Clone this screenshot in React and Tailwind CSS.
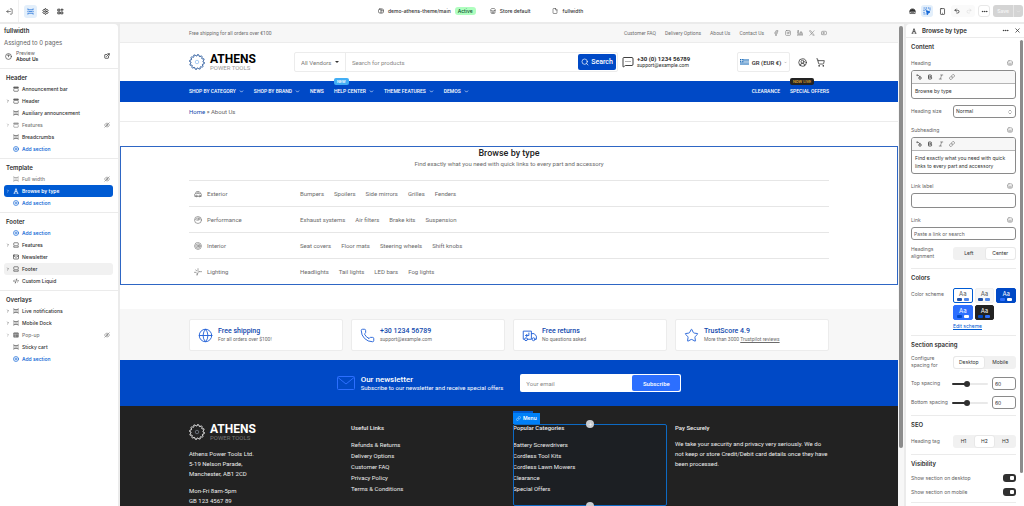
import { useState } from 'react';
import {
  LogOut, Settings, Smartphone, Undo2, Redo2, Ellipsis, ChevronDown, ChevronRight, ExternalLink, CirclePlus,
  Mail, CodeXml, Store, File, Globe, Phone, Star, Search, Facebook, Instagram, Linkedin, Youtube,
  MessageSquareMore, CircleUserRound, ShoppingCart, X, Bold, Italic, Link, ChevronsUpDown, Plus
} from 'lucide-react';

const groups = [
  {
    title: 'Header',
    rows: [
      { name: 'Announcement bar', icon: 'top' },
      { name: 'Header', icon: 'top', open: true },
      { name: 'Auxiliary announcement', icon: 'section' },
      { name: 'Features', icon: 'top', open: true, hidden: true },
      { name: 'Breadcrumbs', icon: 'section' },
      { name: 'Add section', icon: 'add' }
    ]
  },
  {
    title: 'Template',
    rows: [
      { name: 'Full width', icon: 'section', hidden: true },
      { name: 'Browse by type', icon: 'text', open: true, active: true },
      { name: 'Add section', icon: 'add' }
    ]
  },
  {
    title: 'Footer',
    rows: [
      { name: 'Add section', icon: 'add' },
      { name: 'Features', icon: 'bottom', open: true },
      { name: 'Newsletter', icon: 'mail' },
      { name: 'Footer', icon: 'bottom', open: true, hover: true },
      { name: 'Custom Liquid', icon: 'code' }
    ]
  },
  {
    title: 'Overlays',
    rows: [
      { name: 'Live notifications', icon: 'section', open: true },
      { name: 'Mobile Dock', icon: 'section', open: true },
      { name: 'Pop-up', icon: 'popup', open: true, hidden: true },
      { name: 'Sticky cart', icon: 'section' },
      { name: 'Add section', icon: 'add' }
    ]
  }
];

const types = [
  { name: 'Exterior', icon: 'car', links: ['Bumpers', 'Spoilers', 'Side mirrors', 'Grilles', 'Fenders'] },
  { name: 'Performance', icon: 'gauge', links: ['Exhaust systems', 'Air filters', 'Brake kits', 'Suspension'] },
  { name: 'Interior', icon: 'wheel', links: ['Seat covers', 'Floor mats', 'Steering wheels', 'Shift knobs'] },
  { name: 'Lighting', icon: 'spark', links: ['Headlights', 'Tail lights', 'LED bars', 'Fog lights'] }
];

const schemes = [
  { box: 'bg-white text-[#555] border-[#005bd3]', a: 'bg-[#1d4fa5]', b: 'bg-[#4d86e8]', selected: true },
  { box: 'bg-[#f7f7f7] text-[#555] border-[#f1f1f1]', a: 'bg-[#1d4fa5]', b: 'bg-[#4d86e8]' },
  { box: 'bg-[#0049c6] text-white border-[#0049c6]', a: 'bg-[#2c6fff]', b: 'bg-white' },
  { box: 'bg-[#2c6fff] text-white border-[#2c6fff]', a: 'bg-[#0049c6]', b: 'bg-white' },
  { box: 'bg-[#222] text-white border-[#222]', a: 'bg-[#0049c6]', b: 'bg-[#2c6fff]' }
];

function Svg({ className, width = 1.8, children }) {
  return (
    <svg viewBox="0 0 24 24" fill="none" stroke="currentColor" strokeWidth={width} strokeLinecap="round" strokeLinejoin="round" className={className}>
      {children}
    </svg>
  );
}

function SectionIcon({ type, className }) {
  if (type === 'add') return <CirclePlus className={className} strokeWidth={2.5} />;
  if (type === 'mail') return <Mail className={className} strokeWidth={2.5} />;
  if (type === 'code') return <CodeXml className={className} strokeWidth={2.5} />;
  return (
    <svg viewBox="0 0 16 16" fill="none" stroke="currentColor" strokeWidth="1.5" className={className}>
      {type === 'top' && (
        <>
          <path d="M2 2.500h12v3.500H2z" fill="currentColor" fillOpacity="0.6" />
          <path d="M2 8.500v4a1.500 1.500 0 0 0 1.500 1.500h9a1.500 1.500 0 0 0 1.500-1.500v-4" />
        </>
      )}
      {type === 'bottom' && (
        <>
          <path d="M2 8V3.500A1.500 1.500 0 0 1 3.500 2h9A1.500 1.500 0 0 1 14 3.500V8" />
          <path d="M2 10h12v4H2z" />
        </>
      )}
      {type === 'section' && (
        <>
          <path d="M2 1v3h12V1M2 15v-3h12v3" />
          <path d="M2 6.500v3M14 6.500v3M4 8h8" />
        </>
      )}
      {type === 'popup' && (
        <>
          <rect x="1.500" y="2" width="13" height="12" rx="1.500" fill="currentColor" />
          <path d="M1.500 6h13M6 6v8" stroke="#fff" strokeWidth="0.800" />
        </>
      )}
      {type === 'text' && <path d="M1.500 14h5M9.500 14h5M4 14 7.500 2h1L12 14M5.500 9.500h5" strokeWidth="2" />}
    </svg>
  );
}

function TypeIcon({ type, className }) {
  return (
    <Svg className={className}>
      {type === 'car' && (
        <>
          <path d="M2 18v-6l3-2 2-5h9l4 5 2 2v6zM5 10h15M12 5v5" />
          <circle cx="7" cy="18" r="2.500" />
          <circle cx="17" cy="18" r="2.500" />
        </>
      )}
      {type === 'gauge' && (
        <>
          <circle cx="12" cy="12" r="10.500" />
          <path d="M5 9c3-4 11-4 14 0l-4 3H9zM12 12l3-6" />
        </>
      )}
      {type === 'wheel' && (
        <>
          <path d="M12 1.500 19.500 4.500 22.500 12 19.500 19.500 12 22.500 4.500 19.500 1.500 12 4.500 4.500z" />
          <circle cx="12" cy="12" r="6.500" />
          <circle cx="12" cy="12" r="2.500" />
        </>
      )}
      {type === 'spark' && <path d="M1 13h5l3 3v6l3-8 3-3h8M12 2v6l3 3M5 6l4 3" />}
    </Svg>
  );
}

function ReturnTruck({ className }) {
  return (
    <Svg className={className} width={1.5}>
      <path d="M4 18H2V5h13v13H9M15 9h4.500L23 13v5h-2" />
      <circle cx="6.500" cy="18" r="2.300" />
      <circle cx="18.500" cy="18" r="2.300" />
      <path d="M11 8v4H6M8 10l-2 2 2 2" />
    </Svg>
  );
}

function SocialX({ className }) {
  return (
    <Svg className={className}>
      <path d="M3 3h4.500L21 21h-4.500zM20.500 3 13.500 10.800M10.500 13.500 3.500 21" />
    </Svg>
  );
}

function HiddenIcon({ className }) {
  return (
    <Svg className={className} width={2.4}>
      <path d="M5 17C2 14 2 10 6 7c4-3 8-2 10-1M19 8c3 3 3 7-1 10-3 2-7 2-9 1M21 3 3 21" />
      <circle cx="12" cy="12" r="2" />
    </Svg>
  );
}

// saw blade outline with 12 teeth
function sawPath() {
  const teeth = 12;
  let d = '';
  for (let i = 0; i < teeth; i++) {
    const step = (Math.PI * 2) / teeth;
    const point = (r, t) => `${(16 + r * Math.cos((i + t) * step)).toFixed(2)} ${(16 + r * Math.sin((i + t) * step)).toFixed(2)}`;
    d += `${i ? 'L' : 'M'}${point(12, 0)}L${point(15.2, 0.15)}L${point(14.6, 0.5)}L${point(12, 0.75)}`;
  }
  return d + 'Z';
}

function Logo({ dark }) {
  return (
    <a href="#" className="flex items-center gap-[5px]">
      <svg viewBox="0 0 32 32" fill="none" className="size-4 shrink-0">
        <path d={sawPath()} stroke={dark ? '#fff' : '#174a93'} strokeWidth="1.700" strokeLinejoin="round" />
        <circle cx="16" cy="16" r="3.500" stroke={dark ? '#8a94a3' : '#7db4ec'} strokeWidth="1.300" />
      </svg>
      <span className="flex flex-col">
        <span className={`text-[12px] leading-[11px] font-bold ${dark ? 'text-white' : 'text-black'}`}>ATHENS</span>
        <span className={`text-[6px] leading-[5px] ${dark ? 'text-[#777]' : 'text-[#999]'}`}>POWER TOOLS</span>
      </span>
    </a>
  );
}

function TopBar() {
  return (
    <header className="flex items-center justify-between bg-white h-[22px] pr-px text-[#303030] shrink-0">
      <div className="flex items-center">
        <button aria-label="Exit" className="w-[19px] h-[22px] flex items-center justify-center border-r border-[#f1f1f1]">
          <LogOut className="size-[7px] rotate-180" />
        </button>
        <div className="flex items-center gap-[2px] pl-[5px]">
          <button aria-label="Sections" className="size-[13px] rounded-[3px] bg-[#e3effb] text-[#005bd3] flex items-center justify-center">
            <SectionIcon type="section" className="size-[7px]" />
          </button>
          <button aria-label="Theme settings" className="size-[13px] flex items-center justify-center">
            <Settings className="size-[7px]" strokeWidth={3} />
          </button>
          <button aria-label="App embeds" className="size-[13px] flex items-center justify-center">
            <Svg className="size-[7px]" width={3}>
              <path d="M4 4h6v6H4zM4 14h6v6H4zM14 14h6v6h-6zM17 3v7M14 6h7" />
            </Svg>
          </button>
        </div>
      </div>

      <div className="flex items-center font-medium mr-3">
        <Svg className="size-[6px] mr-1" width={2.4}>
          <rect x="2" y="4" width="20" height="16" rx="5" />
          <path d="M12 4v16M12 11h9" />
        </Svg>
        <span>demo-athens-theme/main</span>
        <span className="bg-[#affebf] text-[#0c5132] rounded-[3px] px-[3px] leading-[8px] ml-1">Active</span>
        <Store className="size-[6px] ml-[14px] mr-1" />
        <span>Store default</span>
        <File className="size-[6px] ml-[22px] mr-1" />
        <span>fullwidth</span>
      </div>

      <div className="flex items-center gap-[3px]">
        <button aria-label="Market" className="size-[12px] flex items-center justify-center">
          <Svg className="size-[7px]" width={2.4}>
            <path d="M3 11c0-5 3-8 9-8s9 3 9 8z" fill="currentColor" />
            <path d="M3 11v8h18v-8M8 15h8" />
          </Svg>
        </button>
        <button aria-label="Inspector" className="size-[12px] rounded-[3px] bg-[#e3effb] text-[#005bd3] flex items-center justify-center">
          <Svg className="size-[8px]" width={2.4}>
            <path d="M3 3h1M9 3h2M16 3h1M21 3v1M3 9v2M3 16v1M3 21h1M9 21h1M21 8v1M8 8h1" />
            <path d="m11 11 10 4-5 2-2 5z" fill="currentColor" />
          </Svg>
        </button>
        <button aria-label="Viewport" className="size-[12px] flex items-center justify-center">
          <Smartphone className="size-[7px]" strokeWidth={2.5} />
        </button>
        <div className="flex rounded-[3px] bg-[#fafafa]">
          <button aria-label="Undo" className="size-[12px] flex items-center justify-center"><Undo2 className="size-[6px]" strokeWidth={3} /></button>
          <button aria-label="Redo" className="size-[12px] flex items-center justify-center text-[#d4d4d4]"><Redo2 className="size-[6px]" /></button>
        </div>
        <button aria-label="More" className="size-[12px] rounded-[3px] border border-[#e8e8e8] flex items-center justify-center">
          <Ellipsis className="size-[7px]" strokeWidth={3} />
        </button>
        <div className="flex h-[12px] rounded-[3px] bg-[#d4d4d4] text-[#f5f5f5] overflow-hidden">
          <button className="px-1 font-semibold">Save</button>
          <button aria-label="Save options" className="w-[10px] border-l border-[#e6e6e6] flex items-center justify-center">
            <ChevronDown className="size-[5px]" />
          </button>
        </div>
      </div>
    </header>
  );
}

function Sidebar() {
  return (
    <aside className="w-[118px] shrink-0 bg-white rounded-tr-[4px] text-[#303030] overflow-hidden">
      <div className="px-1 pt-[3px] pb-[6px]">
        <h1 className="font-semibold text-[6px] leading-[8px]">fullwidth</h1>
        <p className="text-[#616161] text-[6px] leading-[8px] mt-[4px]">Assigned to 0 pages</p>
        <div className="flex items-center mt-[3px] pl-[1px] pr-[4px]">
          <Svg className="size-[7px] text-[#4a4a4a]" width={2.4}>
            <circle cx="12" cy="12" r="10" />
            <path d="M8 8c2-2 6-2 8 0M12 8v5" />
          </Svg>
          <div className="ml-[4px] leading-[6px] flex-1">
            <p className="text-[#616161]">Preview</p>
            <p className="font-semibold">About Us</p>
          </div>
          <button aria-label="Open preview"><ExternalLink className="size-[6px]" strokeWidth={3} /></button>
        </div>
      </div>

      {groups.map((group) => (
        <section key={group.title} className="border-t border-[#ebebeb] py-[3px] pl-1 pr-[5px]">
          <h2 className="font-semibold text-[6px] leading-[11px] pl-[2px]">{group.title}</h2>
          <ul>
            {group.rows.map((row) => (
              <li key={row.name}>
                <button
                  className={`w-full h-[12px] rounded-[3px] flex items-center text-left px-[2px] ${
                    row.active ? 'bg-[#005bd3] text-white font-semibold'
                      : row.icon === 'add' ? 'text-[#005bd3] font-medium'
                        : row.hidden ? 'text-[#7a7a7a] font-medium' : 'font-medium'
                  } ${row.hover ? 'bg-[#f1f1f1]' : ''}`}
                >
                  <span className="w-[7px]">{row.open && <ChevronRight className="size-[4px]" strokeWidth={3} />}</span>
                  <SectionIcon type={row.icon} className="size-[6px] mr-[3px]" />
                  <span className="flex-1">{row.name}</span>
                  {row.hidden && <HiddenIcon className="size-[6px] mr-[1px]" />}
                </button>
              </li>
            ))}
          </ul>
        </section>
      ))}
    </aside>
  );
}

function NavLink({ children, menu, badge, badgeClass }) {
  return (
    <a href="#" className="relative flex items-center gap-[3px]">
      {children}
      {menu && <ChevronDown className="size-[5px]" strokeWidth={3} />}
      {badge && <span className={`absolute left-0 -top-[10px] rounded-[2px] px-[3px] text-[4px] leading-[7px] whitespace-nowrap ${badgeClass}`}>{badge}</span>}
    </a>
  );
}

function Feature({ icon: Icon, title, children }) {
  return (
    <div className="bg-white border border-[#ececec] rounded-[2px] flex items-center gap-[5px] h-8 px-[8px]">
      <Icon className="size-[15px] text-[#2563d8]" strokeWidth={1.5} />
      <div>
        <p className="text-[7px] leading-[9px] font-medium text-[#1149ad]">{title}</p>
        <p className="leading-[7px] text-[#6b6b6b]">{children}</p>
      </div>
    </div>
  );
}

function FooterLinks({ title, links }) {
  return (
    <>
      <h3 className="font-medium leading-[7px]">{title}</h3>
      <ul className="mt-2 leading-[11px]">
        {links.map((link) => <li key={link}><a href="#">{link}</a></li>)}
      </ul>
    </>
  );
}

function Preview() {
  return (
    <main className="flex-1 min-w-0 ml-[2px] bg-white flex flex-col overflow-hidden font-['Roboto',sans-serif] text-[#2b2b2b]">
      <div className="bg-[#f7f7f7] border-b border-[#ececec] text-[#6e6e6e]">
        <div className="w-full max-w-[640px] mx-auto flex items-center justify-between py-[6px] leading-[6px]">
          <span>Free shipping for all orders over €100</span>
          <nav className="flex items-center gap-[9px] pr-[2px]">
            <a href="#">Customer FAQ</a>
            <a href="#">Delivery Options</a>
            <a href="#">About Us</a>
            <a href="#">Contact Us</a>
            <span className="flex gap-[6px]">
              <Facebook className="size-[6px]" />
              <Instagram className="size-[6px]" />
              <Linkedin className="size-[6px]" />
              <SocialX className="size-[6px]" />
              <Youtube className="size-[6px]" />
            </span>
          </nav>
        </div>
      </div>

      <div className="w-full max-w-[640px] mx-auto flex items-center py-[9px]">
        <div className="w-[105px]"><Logo /></div>
        <form className="flex items-center border border-[#ececec] rounded-[2px] h-5 w-[324px] text-[6px] text-[#777]">
          <label className="relative flex items-center w-[51px] h-full border-r border-[#ececec]">
            <select aria-label="Vendor" className="appearance-none w-full pl-[6px] outline-none">
              <option>All Vendors</option>
            </select>
            <svg viewBox="0 0 8 4" className="w-[4px] h-[2px] absolute right-[6px]"><path d="M0 0h8L4 4z" fill="#333" /></svg>
          </label>
          <input aria-label="Search" placeholder="Search for products" className="flex-1 min-w-0 px-[6px] outline-none placeholder:text-[#888]" />
          <button type="button" className="bg-[#0049c6] text-white font-medium text-[7px] rounded-[2px] h-4 w-[38px] mr-px flex items-center justify-center gap-[2px]">
            <Search className="size-[8px]" />Search
          </button>
        </form>
        <div className="flex items-center gap-[3px] ml-1">
          <MessageSquareMore className="size-[12px]" strokeWidth={1.8} />
          <div className="leading-[7px]">
            <p className="font-bold text-[6px]">+30 (0) 1234 56789</p>
            <p>support@example.com</p>
          </div>
        </div>
        <button className="ml-auto mr-2 h-5 w-[53px] border border-[#ececec] rounded-[2px] flex items-center justify-center gap-[3px] font-medium text-[6px]">
          <svg viewBox="0 0 27 18" className="w-[9px] h-[6px]">
            <path fill="#fff" d="M0 0h27v18H0z" />
            <path stroke="#1769b8" strokeWidth="2" d="M0 1h27M0 5h27M0 9h27M0 13h27M0 17h27" />
            <path fill="#1769b8" d="M0 0h10v10H0z" />
            <path stroke="#fff" strokeWidth="2" d="M5 0v10M0 5h10" />
          </svg>
          GR (EUR €)
          <ChevronDown className="size-[3px]" />
        </button>
        <button aria-label="Account" className="mr-[9px]"><CircleUserRound className="size-[9px]" /></button>
        <button aria-label="Cart" className="mr-1"><ShoppingCart className="size-[9px]" /></button>
      </div>

      <nav className="bg-[#0049c6] text-white font-medium">
        <div className="w-full max-w-[640px] mx-auto flex items-center gap-[10px] py-[7px]">
          <NavLink menu>SHOP BY CATEGORY</NavLink>
          <NavLink menu>SHOP BY BRAND</NavLink>
          <NavLink>NEWS</NavLink>
          <NavLink menu badge="NEW" badgeClass="bg-[#42aef5] text-white">HELP CENTER</NavLink>
          <NavLink menu>THEME FEATURES</NavLink>
          <NavLink menu>DEMOS</NavLink>
          <span className="ml-auto" />
          <NavLink>CLEARANCE</NavLink>
          <NavLink badge="NOW LIVE" badgeClass="bg-[#222] text-[#e8b130]">SPECIAL OFFERS</NavLink>
        </div>
      </nav>

      <div className="border-b border-[#ececec]">
        <div className="w-full max-w-[640px] mx-auto py-[6px] text-[6px]">
          <a href="#" className="text-[#1149ad]">Home</a> » <span className="text-[#666]">About Us</span>
        </div>
      </div>

      <section className="my-6 border border-[#2e66c4] text-[#6b6b6b]">
        <h2 className="text-center text-[9px] leading-[12px] font-medium text-[#222]">Browse by type</h2>
        <p className="text-center text-[6px] leading-[9px] mb-3">Find exactly what you need with quick links to every part and accessory</p>
        <div className="w-full max-w-[640px] mx-auto text-[6px]">
          {types.map(({ name, icon, links }) => (
            <div key={name} className="flex items-center border-t border-[#e6e6e6] pt-[9px] pb-[8px] leading-[8px]">
              <div className="flex items-center gap-[5px] w-[111px] pl-[5px]">
                <TypeIcon type={icon} className="size-2" />{name}
              </div>
              <div className="flex gap-[10px]">
                {links.map((link) => <a key={link} href="#">{link}</a>)}
              </div>
            </div>
          ))}
        </div>
      </section>

      <div className="bg-[#f7f7f7]">
        <div className="w-full max-w-[640px] mx-auto grid grid-cols-4 gap-2 pt-[10px] pb-[9px]">
          <Feature icon={Globe} title="Free shipping">For all orders over $100!</Feature>
          <Feature icon={Phone} title="+30 1234 56789">support@example.com</Feature>
          <Feature icon={ReturnTruck} title="Free returns">No questions asked</Feature>
          <Feature icon={Star} title="TrustScore 4.9">More than 3000 <a href="#" className="underline">Trustpilot reviews</a></Feature>
        </div>
      </div>

      <div className="bg-[#0049c6] text-white flex items-center justify-center py-[14px]">
        <svg viewBox="0 0 36 28" fill="none" stroke="#2c6fff" strokeWidth="2" className="w-[18px] h-[14px] mr-[6px]">
          <rect x="1" y="1" width="34" height="26" rx="2" />
          <path d="m2 3 16 13L34 3" />
        </svg>
        <div className="mr-[17px]">
          <p className="text-[8px] leading-[9px] font-medium">Our newsletter</p>
          <p className="text-[6px] leading-[8px]">Subscribe to our newsletter and receive special offers</p>
        </div>
        <form className="flex bg-white rounded-[2px] p-px w-[161px] h-[18px]">
          <input type="email" aria-label="Your email" placeholder="Your email" className="flex-1 min-w-0 px-[5px] text-[6px] outline-none placeholder:text-[#888]" />
          <button type="button" className="bg-[#2c6fff] w-12 rounded-[2px] text-[6px] font-medium">Subscribe</button>
        </form>
      </div>

      <footer className="flex-1 bg-[#222] text-[#ededed] text-[6px] flex">
        <div className="w-full max-w-[640px] mx-auto grid grid-cols-4 gap-2 pt-[18px]">
          <div>
            <Logo dark />
            <address className="not-italic leading-[10px] mt-[9px]">
              <p>Athens Power Tools Ltd.</p>
              <p>5-19 Nelson Parade,</p>
              <p>Manchester, AB1 2CD</p>
              <p className="mt-[7px]">Mon-Fri 8am-5pm</p>
              <p>GB 123 4567 89</p>
            </address>
          </div>
          <div>
            <FooterLinks title="Useful Links" links={['Refunds & Returns', 'Delivery Options', 'Customer FAQ', 'Privacy Policy', 'Terms & Conditions']} />
          </div>
          <div className="relative bg-[#1c1f23] outline-1 -outline-offset-1 outline-[#0d6ac4] rounded-[2px]">
            <span className="absolute left-0 -top-[13px] w-5 h-1 bg-[#005bd3]" />
            <span className="absolute left-0 -top-[11px] h-[11px] px-[3px] bg-[#0080f8] text-white font-semibold font-['Inter',sans-serif] text-[5px] flex items-center gap-[2px]">
              <Link className="size-[5px]" />Menu
            </span>
            <span className="absolute left-1/2 -top-1 size-2 -ml-1 rounded-full bg-[#c9ccd0] text-white flex items-center justify-center"><Plus className="size-[5px]" /></span>
            <span className="absolute left-1/2 -bottom-1 size-2 -ml-1 rounded-full bg-[#c9ccd0]" />
            <FooterLinks title="Popular Categories" links={['Battery Screwdrivers', 'Cordless Tool Kits', 'Cordless Lawn Mowers', 'Clearance', 'Special Offers']} />
          </div>
          <div>
            <h3 className="font-medium leading-[7px]">Pay Securely</h3>
            <p className="mt-2 leading-[10px]">We take your security and privacy very seriously. We do not keep or store Credit/Debit card details once they have been processed.</p>
          </div>
        </div>
      </footer>
    </main>
  );
}

function FieldLabel({ htmlFor, children }) {
  return (
    <div className="flex items-center justify-between pr-[3px] leading-[8px] mb-[3px]">
      <label htmlFor={htmlFor}>{children}</label>
      <button aria-label="Connect dynamic source" className="text-[#8a8a8a]">
        <Svg className="size-[6px]" width={2.4}>
          <rect x="2" y="3" width="20" height="18" rx="6" />
          <path d="M2 11c3 3 17 3 20 0M7 17h10" />
        </Svg>
      </button>
    </div>
  );
}

function RichText({ id, label, value, rows }) {
  return (
    <div className="mb-[6px]">
      <FieldLabel htmlFor={id}>{label}</FieldLabel>
      <div className="border border-[#8a8a8a] rounded-[3px] overflow-hidden bg-white">
        <div className="flex items-center gap-[5px] h-[13px] px-1 bg-[#f7f7f7] border-b border-[#b5b5b5] text-[#4a4a4a]">
          <button aria-label="Generate text">
            <Svg className="size-[6px]" width={2.6}>
              <path d="M3 5h4M5 3v4M9 5l5 5M16 9l2 5 5 2-5 2-2 5-2-5-5-2 5-2z" />
            </Svg>
          </button>
          <button aria-label="Bold"><Bold className="size-[6px]" strokeWidth={3.5} /></button>
          <button aria-label="Italic"><Italic className="size-[6px]" /></button>
          <button aria-label="Link"><Link className="size-[6px]" /></button>
        </div>
        <textarea id={id} rows={rows} defaultValue={value} className="block w-full resize-none outline-none p-[3px] leading-[8px] text-[#303030] overflow-hidden" />
      </div>
    </div>
  );
}

function Segmented({ name, options, value, onChange }) {
  return (
    <div role="radiogroup" aria-label={name} className="relative flex flex-1 h-[13px] rounded-[3px] bg-[#f1f1f1]">
      {options.map((option) => (
        <label key={option} className="flex-1 rounded-[3px] border border-transparent flex items-center justify-center has-checked:bg-white has-checked:border-[#e8e8e8] text-[#303030]">
          <input type="radio" name={name} checked={value === option} onChange={() => onChange(option)} className="sr-only" />
          {option}
        </label>
      ))}
    </div>
  );
}

function Spacing({ id, label }) {
  const [value, setValue] = useState(60);
  return (
    <div className="flex items-center h-[13px] mb-[6px]">
      <label htmlFor={id} className="w-[42px]">{label}</label>
      <input
        id={id}
        type="range"
        min="0"
        max="150"
        value={value}
        onChange={(e) => setValue(e.target.value)}
        className="appearance-none w-[36px] h-[2px] rounded-full bg-linear-to-r from-[#303030] from-40% to-[#e9e9e9] to-40% [&::-webkit-slider-thumb]:appearance-none [&::-webkit-slider-thumb]:size-[6px] [&::-webkit-slider-thumb]:rounded-full [&::-webkit-slider-thumb]:bg-[#303030]"
      />
      <input aria-label={label} value={value} onChange={(e) => setValue(e.target.value)} className="ml-[4px] w-6 h-[13px] border border-[#8a8a8a] rounded-[3px] px-[2px] outline-none text-[#303030]" />
    </div>
  );
}

function Toggle({ label }) {
  return (
    <label className="flex items-center justify-between leading-[8px] mb-[6px]">
      {label}
      <input type="checkbox" defaultChecked className="appearance-none w-[13px] h-[8px] rounded-[3px] bg-[#303030] p-[2px] flex justify-end before:content-[''] before:size-[4px] before:rounded-[1px] before:bg-white" />
    </label>
  );
}

function Inspector() {
  const [align, setAlign] = useState('Center');
  const [device, setDevice] = useState('Desktop');
  const [tag, setTag] = useState('H2');

  return (
    <aside className="w-[118px] shrink-0 bg-white rounded-tl-[4px] ml-[2px] text-[#616161] flex flex-col overflow-hidden">
      <div className="flex items-center h-[14px] pl-[5px] pr-[3px] border-b border-[#ebebeb] text-[#303030] shrink-0">
        <SectionIcon type="text" className="size-[6px]" />
        <h2 className="ml-[5px] flex-1 font-semibold text-[6px]">Browse by type</h2>
        <button aria-label="More actions"><Ellipsis className="size-[7px]" strokeWidth={3} /></button>
        <button aria-label="Close" className="ml-[5px]"><X className="size-[7px]" strokeWidth={2.5} /></button>
      </div>

      <div className="flex flex-1 min-h-0">
        <div className="flex-1 min-w-0 pl-[5px] pr-[4px] overflow-hidden">
          <h3 className="font-semibold text-[6px] leading-[8px] text-[#303030] mt-[5px] mb-[8px]">Content</h3>
          <RichText id="heading" label="Heading" rows={1} value="Browse by type" />
          <div className="flex items-center mb-[8px]">
            <label htmlFor="size" className="w-[42px]">Heading size</label>
            <div className="relative flex flex-1 items-center">
              <select id="size" className="appearance-none w-full h-[13px] border border-[#8a8a8a] rounded-[3px] px-[2px] outline-none text-[#303030]">
                <option>Normal</option>
              </select>
              <ChevronsUpDown className="absolute right-[3px] size-[6px]" />
            </div>
          </div>
          <RichText id="subheading" label="Subheading" rows={2} value="Find exactly what you need with quick links to every part and accessory" />
          <div className="mt-2">
            <FieldLabel htmlFor="link-label">Link label</FieldLabel>
          </div>
          <input id="link-label" className="block w-full h-[15px] border border-[#8a8a8a] rounded-[3px] px-[2px] mb-[8px] outline-none" />
          <FieldLabel htmlFor="link">Link</FieldLabel>
          <input id="link" placeholder="Paste a link or search" className="block w-full h-[13px] border border-[#8a8a8a] rounded-[3px] px-[2px] outline-none placeholder:text-[#616161]" />
          <div className="flex items-center mt-[6px] pb-[8px]">
            <span className="w-[42px]">Headings alignment</span>
            <Segmented name="align" options={['Left', 'Center']} value={align} onChange={setAlign} />
          </div>

          <div className="border-t border-[#ebebeb] pt-[5px] pb-[5px]">
            <h3 className="font-semibold text-[6px] leading-[8px] text-[#303030] mb-[6px]">Colors</h3>
            <div className="flex">
              <span className="w-[42px] pt-[3px]">Color scheme</span>
              <div className="flex-1">
                <div className="grid grid-cols-3 gap-[2px]">
                  {schemes.map((scheme, i) => (
                    <button key={i} aria-label={`Scheme ${i + 1}`} aria-pressed={!!scheme.selected} className={`h-[15px] rounded-[2px] border flex flex-col items-center justify-center ${scheme.box}`}>
                      <span className="text-[6px] leading-[7px]">Aa</span>
                      <span className="flex gap-[2px] mt-px">
                        <span className={`w-[5px] h-[3px] rounded-[1px] ${scheme.a}`} />
                        <span className={`w-[5px] h-[3px] rounded-[1px] ${scheme.b}`} />
                      </span>
                    </button>
                  ))}
                </div>
                <a href="#" className="block text-[#005bd3] underline mt-[3px]">Edit scheme</a>
              </div>
            </div>
          </div>

          <div className="border-t border-[#ebebeb] pt-[5px]">
            <h3 className="font-semibold text-[6px] leading-[8px] text-[#303030] mb-[6px]">Section spacing</h3>
            <div className="flex items-center mb-[8px]">
              <span className="w-[42px]">Configure spacing for</span>
              <Segmented name="device" options={['Desktop', 'Mobile']} value={device} onChange={setDevice} />
            </div>
            <Spacing id="top" label="Top spacing" />
            <Spacing id="bottom" label="Bottom spacing" />
          </div>

          <div className="border-t border-[#ebebeb] pt-[5px] pb-[6px]">
            <h3 className="font-semibold text-[6px] leading-[8px] text-[#303030] mb-[6px]">SEO</h3>
            <div className="flex items-center">
              <span className="w-[42px]">Heading tag</span>
              <Segmented name="tag" options={['H1', 'H2', 'H3']} value={tag} onChange={setTag} />
            </div>
          </div>

          <div className="border-t border-b border-[#ebebeb] pt-[5px]">
            <h3 className="font-semibold text-[6px] leading-[8px] text-[#303030] mb-[6px]">Visibility</h3>
            <Toggle label="Show section on desktop" />
            <Toggle label="Show section on mobile" />
          </div>
        </div>
        <div className="w-[4px] pt-[2px] pr-px">
          <div className="h-[93%] rounded-full bg-[#8c8c8c]" />
        </div>
      </div>
    </aside>
  );
}

export default function App() {
  return (
    <div className="h-screen flex flex-col overflow-hidden bg-[#ebebeb] font-['Inter',sans-serif] text-[5px] leading-[7px]">
      <TopBar />
      <div className="flex flex-1 min-h-0 pt-[2px]">
        <Sidebar />
        <Preview />
        <div className="w-[6px] px-px pt-[2px] bg-[#f7f7f7]">
          <div className="h-[88%] rounded-full bg-[#8c8c8c]" />
        </div>
        <Inspector />
      </div>
    </div>
  );
}
